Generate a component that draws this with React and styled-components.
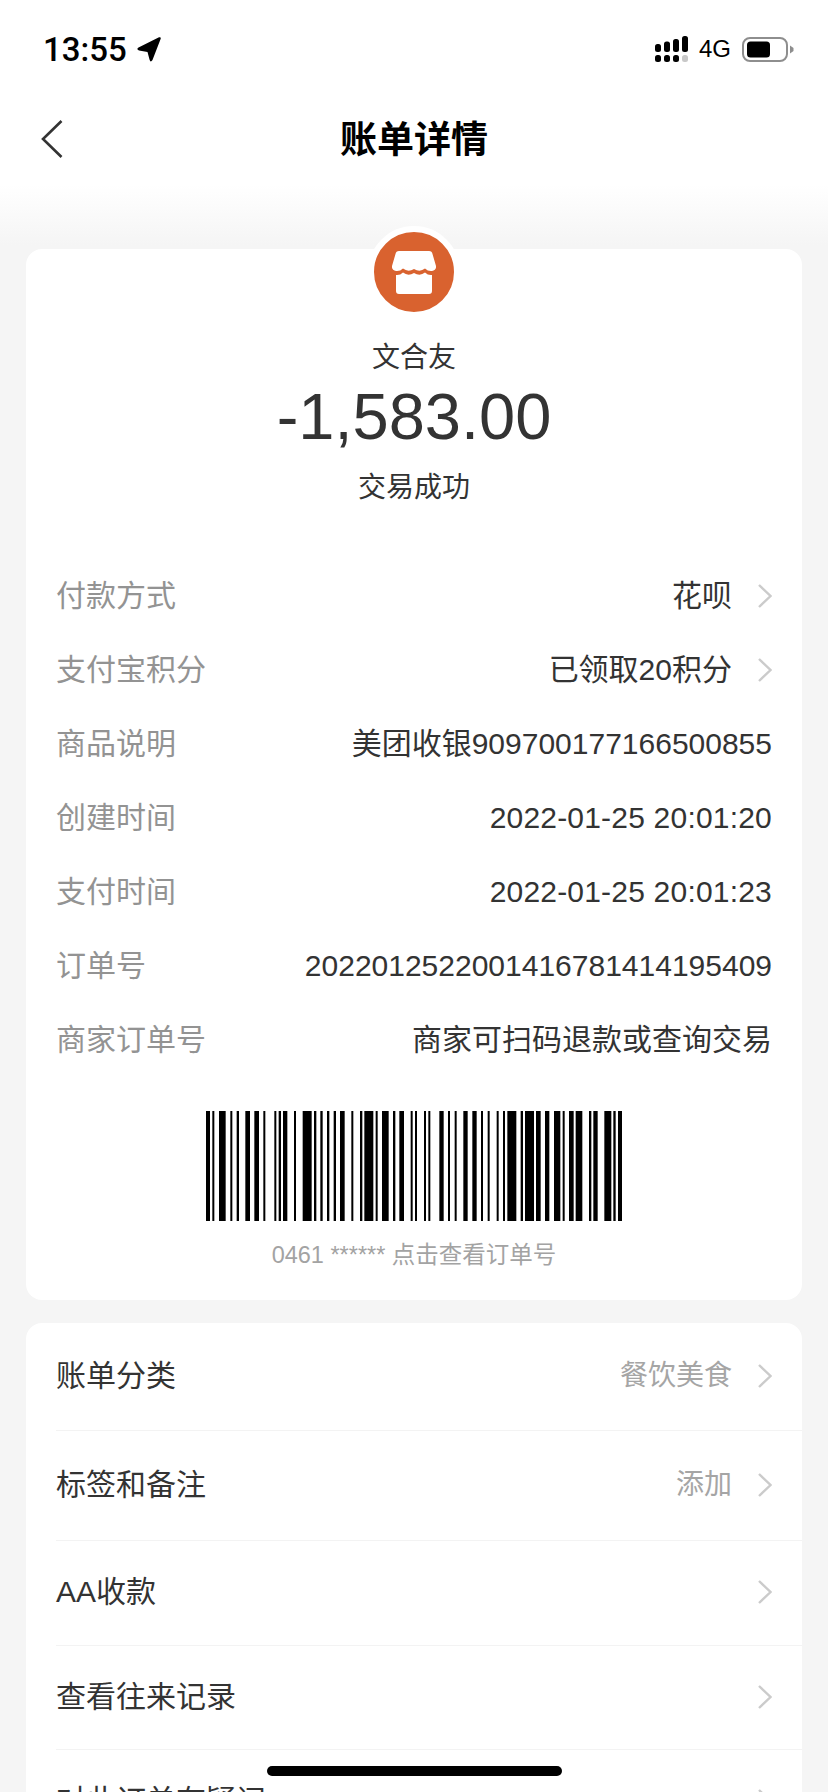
import React from 'react';
import styled, { createGlobalStyle } from 'styled-components';

const GlobalStyle = createGlobalStyle`
	html, body {
		margin: 0;
		padding: 0;
		background: #f5f5f5;
	}
	* {
		box-sizing: border-box;
	}
`;

const BARS = [
	[48, 60], [67, 73], [87, 107], [121, 127], [140, 147], [166, 180], [193, 207], [220, 226],
	[253, 259], [266, 273], [279, 292], [312, 318], [338, 365], [372, 379], [391, 398], [411, 418],
	[431, 438], [450, 464], [484, 490], [510, 517], [523, 550], [557, 563], [576, 596], [609, 616],
	[628, 642], [662, 668], [675, 681], [702, 708], [715, 721], [748, 761], [774, 780], [794, 800],
	[820, 833], [847, 860], [873, 879], [893, 899], [920, 926], [939, 945], [952, 979], [992, 999],
	[1005, 1032], [1038, 1052], [1065, 1078], [1092, 1111], [1118, 1124], [1137, 1151], [1157, 1177],
	[1197, 1204], [1210, 1223], [1243, 1264], [1270, 1277], [1284, 1296],
];

const DETAILS = [
	{ label: '付款方式', value: '花呗', arrow: true },
	{ label: '支付宝积分', value: '已领取20积分', arrow: true },
	{ label: '商品说明', value: '美团收银909700177166500855' },
	{ label: '创建时间', value: '2022-01-25 20:01:20', date: true },
	{ label: '支付时间', value: '2022-01-25 20:01:23', date: true },
	{ label: '订单号', value: '2022012522001416781414195409' },
	{ label: '商家订单号', value: '商家可扫码退款或查询交易' },
];

const ACTIONS = [
	{ label: '账单分类', value: '餐饮美食', height: 108 },
	{ label: '标签和备注', value: '添加', height: 110 },
	{ label: 'AA收款', height: 105 },
	{ label: '查看往来记录', height: 104 },
	{ label: '对此订单有疑问', height: 104 },
];

const Chevron = () => (
	<ChevronIcon viewBox="0 0 14 24" fill="none">
		<path d="M1 1 L12.5 12 L1 23" stroke="#cbcbcb" strokeWidth="2.4" />
	</ChevronIcon>
);

export default function App() {
	return (
		<Page>
			<GlobalStyle />
			<StatusBar>
				<TimeGroup>
					<Time>13:55</Time>
					<svg width="24" height="25" viewBox="0 0 24 25">
						<path
							d="M22 0.300 Q24.300 -0.300 23.600 2 L15.500 23 Q13.500 26 12.500 22.500 L10.500 15 L2 13.500 Q-1 12.500 1.500 10.500 Z"
							fill="#000"
						/>
					</svg>
				</TimeGroup>
				<StatusRight>
					<svg width="33" height="26" viewBox="0 0 33 26">
						<g fill="#000">
							<rect x="0" y="8" width="6" height="8" rx="2.5" />
							<rect x="9" y="5.5" width="6" height="10.5" rx="2.5" />
							<rect x="18" y="3" width="6" height="13" rx="2.5" />
							<rect x="27" y="0" width="6" height="16" rx="2.5" />
							<rect x="0" y="19" width="6" height="7" rx="2.5" />
							<rect x="9" y="19" width="6" height="7" rx="2.5" />
							<rect x="18" y="19" width="6" height="7" rx="2.5" />
						</g>
						<rect x="27" y="19" width="6" height="7" rx="2.5" fill="#c8c8c8" />
					</svg>
					<Network>4G</Network>
					<svg width="52" height="25" viewBox="0 0 52 25">
						<rect x="1" y="1" width="44" height="23" rx="7" fill="none" stroke="#8e8e8e" strokeWidth="2" />
						<rect x="5" y="4.5" width="23" height="16" rx="3.5" fill="#000" />
						<path d="M48 8.5 L51.5 11 V14 L48 16.5 Z" fill="#8e8e8e" />
					</svg>
				</StatusRight>
			</StatusBar>

			<NavBar>
				<BackIcon viewBox="0 0 22 38" fill="none">
					<path d="M20.5 1 L2 19 L20.5 37" stroke="#333" strokeWidth="2.6" />
				</BackIcon>
				<Title>账单详情</Title>
			</NavBar>

			<SummaryCard>
				<Avatar>
					<svg width="44" height="43" viewBox="0 0 44 43">
						<path d="M7 0 H37 Q40 0 40.500 3 L44 15 Q44.500 19 40 20 Q36 20.500 33 17.500 Q28 21.500 22 18 Q16 21.500 11 17.500 Q8 20.500 4 20 Q-0.500 19 0 15 L3.500 3 Q4 0 7 0 Z" fill="#fff" />
						<path d="M4 24 Q8 24.500 11 21.500 Q16 25.500 22 22 Q28 25.500 33 21.500 Q36 24.500 40 24 V40 Q40 43 37 43 H7 Q4 43 4 40 Z" fill="#fff" />
					</svg>
				</Avatar>
				<Merchant>文合友</Merchant>
				<Amount>-1,583.00</Amount>
				<TradeStatus>交易成功</TradeStatus>
				<Details>
					{DETAILS.map(item => (
						<DetailRow key={item.label}>
							<DetailLabel>{item.label}</DetailLabel>
							<DetailValue $date={item.date}>{item.value}</DetailValue>
							{item.arrow && <Chevron />}
						</DetailRow>
					))}
				</Details>
				<Barcode viewBox="48 0 1248 110" preserveAspectRatio="none">
					{BARS.map(([from, to]) => (
						<rect key={from} x={from} y="0" width={to - from} height="110" fill="#000" />
					))}
				</Barcode>
				<BarcodeCaption>0461 ****** 点击查看订单号</BarcodeCaption>
			</SummaryCard>

			<ActionCard>
				{ACTIONS.map(item => (
					<ActionRow key={item.label} $height={item.height}>
						<ActionLabel>{item.label}</ActionLabel>
						{item.value && <ActionValue>{item.value}</ActionValue>}
						<Chevron />
					</ActionRow>
				))}
			</ActionCard>

			<HomeIndicator />
		</Page>
	);
}

const Page = styled.div`
	position: relative;
	width: 828px;
	height: 1792px;
	overflow: hidden;
	background: linear-gradient(to bottom, #ffffff 0, #ffffff 185px, #f5f5f5 245px);
	font-family: 'Liberation Sans', 'Noto Sans CJK SC', sans-serif;
	color: #333;
`;

const StatusBar = styled.div`
	display: flex;
	justify-content: space-between;
	align-items: center;
	height: 98px;
	padding: 0 34px 0 43px;
`;

const TimeGroup = styled.div`
	display: flex;
	align-items: center;
	gap: 10px;
`;

const Time = styled.span`
	font-family: Roboto, 'Liberation Sans', sans-serif;
	font-size: 33px;
	font-weight: 500;
	color: #000;
`;

const StatusRight = styled.div`
	display: flex;
	align-items: center;
	gap: 11px;
`;

const Network = styled.span`
	font-size: 24px;
	color: #000;
`;

const NavBar = styled.div`
	position: relative;
	display: flex;
	justify-content: center;
	align-items: center;
	height: 82px;
	padding-top: 4px;
`;

const BackIcon = styled.svg`
	position: absolute;
	left: 41px;
	top: 22px;
	width: 22px;
	height: 38px;
`;

const Title = styled.h1`
	margin: 0;
	font-size: 37px;
	line-height: 48px;
	font-weight: 700;
	color: #000;
`;

const Card = styled.section`
	background: #fff;
	border-radius: 16px;
	width: 776px;
	margin: 0 auto;
`;

const SummaryCard = styled(Card)`
	position: relative;
	display: flex;
	flex-direction: column;
	align-items: center;
	margin-top: 69px;
	padding: 89px 0 29px;
`;

const Avatar = styled.div`
	position: absolute;
	top: -23px;
	left: 50%;
	transform: translateX(-50%);
	display: flex;
	justify-content: center;
	align-items: center;
	width: 92px;
	height: 92px;
	border-radius: 50%;
	border: 6px solid #fff;
	background: #d9622f;
`;

const Merchant = styled.div`
	font-size: 28px;
	line-height: 40px;
`;

const Amount = styled.div`
	font-size: 65px;
	line-height: 72px;
	margin-top: 3px;
`;

const TradeStatus = styled.div`
	font-size: 28px;
	line-height: 40px;
	margin-top: 15px;
`;

const Details = styled.div`
	align-self: stretch;
	margin-top: 51px;
	padding: 0 30px;
`;

const DetailRow = styled.div`
	display: flex;
	align-items: center;
	height: 74px;
	font-size: 30px;
	line-height: 40px;
`;

const DetailLabel = styled.span`
	color: #939393;
	margin-right: auto;
`;

const DetailValue = styled.span`
	color: #333;
	letter-spacing: ${props => (props.$date ? '0.2px' : '0')};
`;

const ChevronIcon = styled.svg`
	flex: none;
	width: 14px;
	height: 24px;
	margin-left: 26px;
`;

const Barcode = styled.svg`
	display: block;
	width: 416px;
	height: 110px;
	margin-top: 34px;
`;

const BarcodeCaption = styled.div`
	margin-top: 18px;
	font-size: 23.5px;
	line-height: 32px;
	color: #a3a3a3;
`;

const ActionCard = styled(Card)`
	margin-top: 23px;
`;

const ActionRow = styled.div`
	display: flex;
	align-items: center;
	height: ${props => props.$height}px;
	margin-left: 30px;
	padding-right: 30px;
	padding-bottom: 2px;
	font-size: 30px;
	line-height: 40px;
	border-bottom: 1px solid #f3f3f3;
`;

const ActionLabel = styled.span`
	color: #333;
	margin-right: auto;
`;

const ActionValue = styled.span`
	color: #a5a5a5;
	font-size: 28px;
`;

const HomeIndicator = styled.div`
	position: absolute;
	left: 267px;
	bottom: 16px;
	width: 295px;
	height: 10px;
	border-radius: 5px;
	background: #000;
`;
